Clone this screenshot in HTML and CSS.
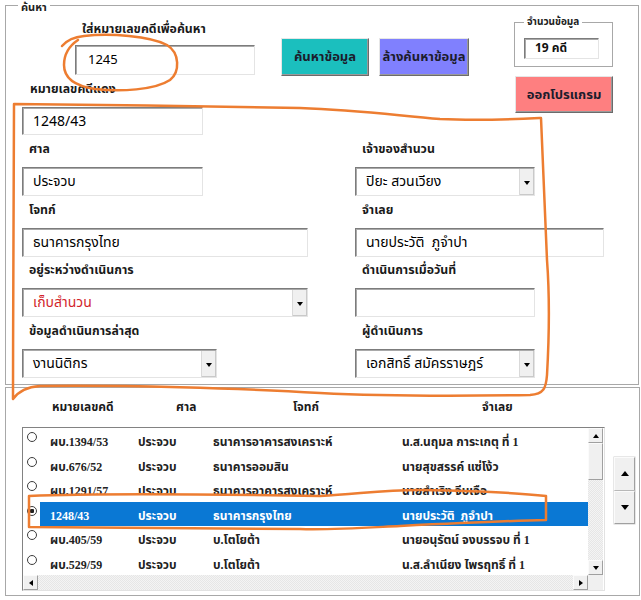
FILE: index.html
```html
<!DOCTYPE html>
<html lang="th">
<head>
<meta charset="utf-8">
<title>ค้นหาข้อมูลคดี</title>
<link rel="stylesheet" href="styles.css">
</head>
<body>
<div class="form">
  <section class="frame frame-search">
    <span class="caption">ค้นหา</span>
    <div class="top">
      <div class="top-left">
        <div class="search-row">
          <div class="search-group">
            <div class="label label-search">ใส่หมายเลขคดีเพื่อค้นหา</div>
            <div class="field field-search">1245</div>
          </div>
          <button class="btn btn-find">ค้นหาข้อมูล</button>
          <button class="btn btn-clear">ล้างค้นหาข้อมูล</button>
        </div>
        <div class="label label-case">หมายเลขคดีแดง</div>
        <div class="field field-case">1248/43</div>
      </div>
      <div class="top-right">
        <div class="count-box">
          <span class="caption caption-small">จำนวนข้อมูล</span>
          <div class="count-field">19 คดี</div>
        </div>
        <button class="btn btn-exit">ออกโปรแกรม</button>
      </div>
    </div>

    <div class="fields">
      <div class="cell">
        <div class="label">ศาล</div>
        <div class="field w181">ประจวบ</div>
      </div>
      <div class="cell">
        <div class="label">เจ้าของสำนวน</div>
        <div class="field combo w180">ปิยะ สวนเวียง<span class="drop"></span></div>
      </div>
      <div class="cell">
        <div class="label">โจทก์</div>
        <div class="field w286">ธนาคารกรุงไทย</div>
      </div>
      <div class="cell">
        <div class="label">จำเลย</div>
        <div class="field w249">นายประวัติ&nbsp; ภูจำปา</div>
      </div>
      <div class="cell">
        <div class="label">อยู่ระหว่างดำเนินการ</div>
        <div class="field combo w286 text-red">เก็บสำนวน<span class="drop"></span></div>
      </div>
      <div class="cell">
        <div class="label">ดำเนินการเมื่อวันที่</div>
        <div class="field w180"></div>
      </div>
      <div class="cell">
        <div class="label">ข้อมูลดำเนินการล่าสุด</div>
        <div class="field combo w195">งานนิติกร<span class="drop"></span></div>
      </div>
      <div class="cell">
        <div class="label">ผู้ดำเนินการ</div>
        <div class="field combo w180">เอกสิทธิ์ สมัครราษฎร์<span class="drop"></span></div>
      </div>
    </div>
  </section>

  <section class="frame frame-list">
    <div class="list-head">
      <span>หมายเลขคดี</span>
      <span>ศาล</span>
      <span>โจทก์</span>
      <span>จำเลย</span>
    </div>
    <div class="list-area">
      <div class="listbox">
        <div class="rows">
          <div class="row"><span class="radio"></span><span>ผบ.1394/53</span><span>ประจวบ</span><span>ธนาคารอาคารสงเคราะห์</span><span>น.ส.นฤมล การะเกตุ ที่ 1</span></div>
          <div class="row"><span class="radio"></span><span>ผบ.676/52</span><span>ประจวบ</span><span>ธนาคารออมสิน</span><span>นายสุขสรรค์ แซ่โง้ว</span></div>
          <div class="row"><span class="radio"></span><span>ผบ.1291/57</span><span>ประจวบ</span><span>ธนาคารอาคารสงเคราะห์</span><span>นายสำเริง จีบเจือ</span></div>
          <div class="row selected"><span class="radio checked"></span><span>1248/43</span><span>ประจวบ</span><span>ธนาคารกรุงไทย</span><span>นายประวัติ&nbsp; ภูจำปา</span></div>
          <div class="row"><span class="radio"></span><span>ผบ.405/59</span><span>ประจวบ</span><span>บ.โตโยต้า</span><span>นายอนุรัตน์ จงบรรจบ ที่ 1</span></div>
          <div class="row"><span class="radio"></span><span>ผบ.529/59</span><span>ประจวบ</span><span>บ.โตโยต้า</span><span>น.ส.ลำเนียง ไพรฤทธิ์ ที่ 1</span></div>
        </div>
        <div class="vscroll">
          <span class="sb-btn"><i class="tri tri-up"></i></span>
          <span class="sb-thumb"></span>
          <span class="sb-track"></span>
          <span class="sb-btn"><i class="tri tri-down"></i></span>
        </div>
        <div class="hscroll">
          <span class="sb-btn"><i class="tri tri-left"></i></span>
          <span class="sb-track"></span>
          <span class="sb-btn"><i class="tri tri-right"></i></span>
        </div>
        <div class="sb-corner"></div>
      </div>
      <div class="spin">
        <span class="spin-btn"><i class="tri tri-up big"></i></span>
        <span class="spin-btn"><i class="tri tri-down big"></i></span>
      </div>
    </div>
  </section>

  <!-- pen marks drawn over the form -->
  <svg class="marks" width="641" height="600" viewBox="0 0 641 600" aria-hidden="true">
    <path d="M62 46 C67 40 74 37 84 36 C110 33 150 36 167 45 C180 53 180 72 170 80 C155 90 120 92 95 89 C75 86 64 78 64 65 C64 54 69 46 78 40"/>
    <path d="M14 104 C100 105 220 106 300 108 C360 110 400 116 440 119 C480 121 520 119 541 118 C543 170 545 220 547 260 C550 300 549 340 547 375 C546 388 544 394 530 395 C470 396 380 396 320 393 C240 388 120 385 40 386 C26 387 18 392 13 399 C13 300 14 200 14 104"/>
    <path d="M29 527 L29 496 C100 493 200 494 320 496 C360 494 380 490 420 490 C480 491 520 493 546 496 L546 520 C500 521 440 524 400 526 C360 528 330 530 300 529 C200 528 100 527 29 527"/>
  </svg>
</div>
</body>
</html>
```

FILE: styles.css
```css
* {
  box-sizing: border-box;
}

html, body {
  margin: 0;
  background: #ffffff;
}

body {
  font-family: Tahoma, "Microsoft Sans Serif", "Noto Sans Thai", "Noto Sans Thai UI", Loma, Garuda, sans-serif;
  color: #111;
  font-size: 13px;
}

.form {
  position: relative;
  width: 641px;
  height: 600px;
  padding: 5px 0 0 5px;
}

/* ---------- frames ---------- */
.frame {
  position: relative;
  border: 1px solid #a8a8a8;
}

.frame-search {
  width: 634px;
  height: 380px;
}

.frame-list {
  width: 635px;
  height: 209px;
  margin-top: 2px;
}

.caption {
  position: absolute;
  left: 12px;
  top: -5px;
  padding: 0 3px;
  background: #fff;
  font-size: 11px;
  line-height: 13px;
  font-weight: bold;
  color: #222;
}

/* ---------- top block ---------- */
.top {
  display: flex;
  align-items: flex-start;
}

.search-row {
  display: flex;
  align-items: flex-start;
}

.search-group {
  margin: 16px 0 0 69px;
}

.label {
  height: 24px;
  padding-left: 7px;
  font-size: 12.3px;
  line-height: 14px;
  font-weight: bold;
  color: #1a1a1a;
  white-space: nowrap;
}

.label-search {
  height: 23px;
  padding: 1px 0 0 7px;
}

.label-case {
  margin: 7px 0 0 17px;
}

.field {
  position: relative;
  display: flex;
  align-items: center;
  height: 29px;
  padding-left: 10px;
  background: #fff;
  border: 1px solid;
  border-color: #7c7c7c #e4e4e4 #e4e4e4 #7c7c7c;
  box-shadow: inset 1px 1px 0 #a9a9a9;
  font-size: 14px;
  color: #000;
  white-space: nowrap;
}

.field-search {
  width: 180px;
  height: 30px;
  padding-left: 12px;
  font-size: 13px;
}

.field-case {
  width: 181px;
  height: 28px;
  margin-left: 16px;
}

.w180 { width: 180px; }
.w181 { width: 181px; }
.w195 { width: 195px; }
.w249 { width: 249px; }
.w286 { width: 286px; }

.text-red {
  color: #d21f2b;
}

/* combo box drop button */
.drop {
  position: absolute;
  right: 0;
  top: 1px;
  bottom: 0;
  width: 15px;
  background: #f0f0f0;
  border-left: 1px solid #d9d9d9;
  box-shadow: inset -1px -1px 0 #c9c9c9;
}

.drop::after {
  content: "";
  position: absolute;
  left: 4px;
  top: 50%;
  margin-top: -1px;
  border-left: 3.5px solid transparent;
  border-right: 3.5px solid transparent;
  border-top: 4px solid #000;
}

/* ---------- buttons ---------- */
.btn {
  display: flex;
  align-items: center;
  justify-content: center;
  padding: 0;
  font-family: inherit;
  font-size: 13px;
  font-weight: bold;
  color: #1c1c2c;
  border: 1px solid;
  border-color: #e6e6e6 #6b6b6b #6b6b6b #e6e6e6;
  box-shadow: inset -1px -1px 0 #9a9a9a;
  white-space: nowrap;
}

.btn-find {
  width: 88px;
  height: 38px;
  margin: 32px 0 0 26px;
  background: #1bbfbe;
}

.btn-clear {
  width: 90px;
  height: 38px;
  margin: 32px 0 0 10px;
  background: #8080fe;
}

.btn-exit {
  width: 98px;
  height: 37px;
  margin: 9px 0 0 1px;
  background: #fe7f80;
}

.top-right {
  margin: 0 25px 0 auto;
}

.count-box {
  position: relative;
  width: 99px;
  height: 45px;
  margin-top: 16px;
  border: 1px solid #a8a8a8;
  padding: 15px 0 0 9px;
}

.caption-small {
  left: 9px;
  top: -8px;
  font-size: 10px;
  line-height: 14px;
}

.count-field {
  width: 75px;
  height: 21px;
  padding-left: 10px;
  font-size: 12px;
  font-weight: bold;
  line-height: 19px;
  border: 1px solid;
  border-color: #7c7c7c #e4e4e4 #e4e4e4 #7c7c7c;
  box-shadow: inset 1px 1px 0 #a9a9a9;
}

/* ---------- field grid ---------- */
.fields {
  display: grid;
  grid-template-columns: 333px 1fr;
  row-gap: 7.5px;
  margin: 8px 0 0 16px;
}

/* ---------- list frame ---------- */
.list-head {
  display: grid;
  grid-template-columns: 124px 117px 189px 1fr;
  height: 39px;
  padding: 11px 0 0 46px;
  font-size: 12px;
  line-height: 16px;
  font-weight: bold;
  color: #1a1a1a;
}

.list-area {
  display: flex;
  align-items: flex-start;
}

.listbox {
  display: grid;
  grid-template-columns: 565px 15px;
  grid-template-rows: 147px 15px;
  width: 583px;
  height: 164px;
  margin-left: 16px;
  border: 1px solid;
  border-color: #828282 #e2e2e2 #e2e2e2 #828282;
  background: #fff;
}

.rows {
  overflow: hidden;
}

.row {
  display: grid;
  grid-template-columns: 17px 10px 88px 75px 189px 1fr;
  height: 24.5px;
  font-family: "Liberation Serif", Tahoma, "Noto Sans Thai", Loma, Garuda, serif;
  font-size: 12px;
  line-height: 28px;
  font-weight: bold;
  color: #222;
  white-space: nowrap;
}

.row > span:nth-child(2) {
  grid-column: 3;
}

.row.selected {
  background: linear-gradient(to right, transparent 17px, #0a78d4 17px);
  color: #fff;
}

.radio {
  width: 10px;
  height: 10px;
  margin: 4px 0 0 4px;
  border: 1px solid #3c3c3c;
  border-radius: 50%;
  background: #fff;
}

.radio.checked {
  background: radial-gradient(circle, #222 0 2px, #fff 2.5px);
}

/* scroll bars */
.vscroll {
  display: flex;
  flex-direction: column;
  background: #f0f0f0;
}

.hscroll {
  display: flex;
  background: #f0f0f0;
}

.sb-track {
  flex: 1;
  background-color: #f4f4f4;
  background-image:
    linear-gradient(45deg, #e6e6e6 25%, transparent 25%, transparent 75%, #e6e6e6 75%),
    linear-gradient(45deg, #e6e6e6 25%, transparent 25%, transparent 75%, #e6e6e6 75%);
  background-size: 2px 2px;
  background-position: 0 0, 1px 1px;
}

.sb-btn {
  position: relative;
  display: flex;
  align-items: center;
  justify-content: center;
  width: 15px;
  height: 15px;
  flex: none;
  background: #f0f0f0;
  border: 1px solid;
  border-color: #fbfbfb #a0a0a0 #a0a0a0 #fbfbfb;
}

.sb-thumb {
  height: 37px;
  flex: none;
  background: #f0f0f0;
  border: 1px solid;
  border-color: #fbfbfb #a0a0a0 #a0a0a0 #fbfbfb;
}

.sb-corner {
  background: #f0f0f0;
}

.tri {
  display: block;
  width: 0;
  height: 0;
}

.tri-up {
  border-left: 3.5px solid transparent;
  border-right: 3.5px solid transparent;
  border-bottom: 4px solid #000;
}

.tri-down {
  border-left: 3.5px solid transparent;
  border-right: 3.5px solid transparent;
  border-top: 4px solid #000;
}

.tri-left {
  border-top: 3.5px solid transparent;
  border-bottom: 3.5px solid transparent;
  border-right: 4px solid #000;
}

.tri-right {
  border-top: 3.5px solid transparent;
  border-bottom: 3.5px solid transparent;
  border-left: 4px solid #000;
}

.tri-up.big {
  border-left-width: 4.5px;
  border-right-width: 4.5px;
  border-bottom-width: 5px;
}

.tri-down.big {
  border-left-width: 4.5px;
  border-right-width: 4.5px;
  border-top-width: 5px;
}

/* spin button pair */
.spin {
  display: flex;
  flex-direction: column;
  width: 21px;
  margin: 30px 0 0 9px;
}

.spin-btn {
  display: flex;
  align-items: center;
  justify-content: center;
  height: 33.5px;
  background: #f0f0f0;
  border: 1px solid;
  border-color: #fbfbfb #a0a0a0 #a0a0a0 #fbfbfb;
  box-shadow: 0 0 0 0.5px #d0d0d0;
}

/* ---------- pen marks ---------- */
.marks {
  position: absolute;
  left: 0;
  top: 0;
  pointer-events: none;
  fill: none;
  stroke: #ed7d31;
  stroke-width: 2.5;
  stroke-linecap: round;
  stroke-linejoin: round;
}
```
